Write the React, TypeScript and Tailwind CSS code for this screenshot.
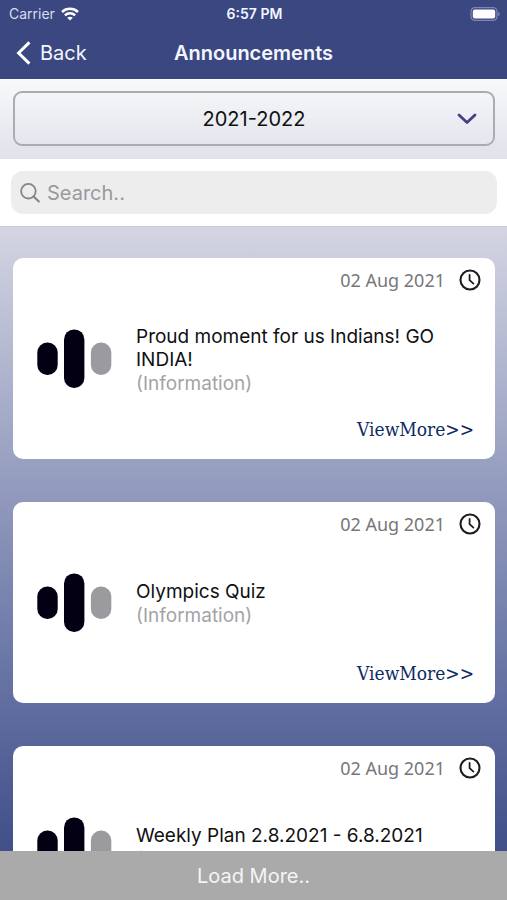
import { useState } from "react";

type Announcement = { id: number; date: string; title: string; kind: string };

const announcements: Announcement[] = [
  { id: 1, date: "02 Aug 2021", title: "Proud moment for us Indians! GO INDIA!", kind: "(Information)" },
  { id: 2, date: "02 Aug 2021", title: "Olympics Quiz", kind: "(Information)" },
  { id: 3, date: "02 Aug 2021", title: "Weekly Plan 2.8.2021 - 6.8.2021", kind: "(Information)" },
];

function WifiIcon() {
  return (
    <svg className="h-[14px] w-[18px]" viewBox="0 0 18 14" fill="none" stroke="currentColor" strokeWidth="2.5" aria-hidden="true">
      <path d="M1 5C5.4.8 12.6.8 17 5" />
      <path d="M3.9 8.3c2.8-2.8 7.4-2.8 10.2 0" />
      <path d="M9 13.6 6.2 10.8c1.6-1.4 4-1.4 5.6 0Z" fill="currentColor" stroke="none" />
    </svg>
  );
}

function BatteryIcon() {
  return (
    <svg className="h-[14px] w-[30px]" viewBox="0 0 30 14" aria-hidden="true">
      <rect x="1" y="0.6" width="26" height="12.8" rx="4" fill="none" stroke="#8088b0" strokeWidth="1.2" />
      <rect x="2.8" y="2.4" width="22.4" height="9.2" rx="2" fill="#fff" />
      <path d="M28.2 4.8c2 .8 2 3.6 0 4.4Z" fill="#8088b0" />
    </svg>
  );
}

function ClockIcon() {
  return (
    <svg className="size-[22px]" viewBox="0 0 22 22" fill="none" stroke="#1c1c1e" strokeLinecap="round" strokeLinejoin="round" aria-hidden="true">
      <circle cx="11" cy="11" r="9.5" strokeWidth="2.1" />
      <path d="M10.6 6v5.2l3.8 3.4" strokeWidth="1.8" />
    </svg>
  );
}

function BarsLogo() {
  return (
    <svg className="h-[60px] w-[76px] shrink-0" viewBox="0 0 76 60" aria-hidden="true">
      <rect x="0.3" y="13.5" width="20.4" height="32.5" rx="10" fill="#030014" />
      <rect x="27" y="0.4" width="20.4" height="58.6" rx="10" fill="#030014" />
      <rect x="53.9" y="13.5" width="20.4" height="32.5" rx="10" fill="#9b9a9e" />
    </svg>
  );
}

function AnnouncementCard({ item }: { item: Announcement }) {
  return (
    <article className="flex h-[201px] shrink-0 flex-col rounded-[10px] bg-white pl-6 pr-[14px]">
      <div className="flex h-11 items-center justify-end gap-[14px]">
        <time className="font-['Noto_Sans',sans-serif] text-[18px] leading-6 text-[#77777a]">{item.date}</time>
        <ClockIcon />
      </div>
      <div className="flex flex-1 items-center gap-[23px]">
        <BarsLogo />
        <div className="flex-1 pr-10 pt-0.5 text-[19px] leading-[23px]">
          <h2 className="text-[#101012]">{item.title}</h2>
          <p className="mt-px text-[#a3a3a6]">{item.kind}</p>
        </div>
      </div>
      <div className="flex h-[44px] items-start justify-end pr-[7px]">
        <a href="#more" className="font-['DejaVu_Serif_Condensed','DejaVu_Serif',serif] text-[19px] leading-7 text-[#0f2c62]">
          ViewMore&gt;&gt;
        </a>
      </div>
    </article>
  );
}

export default function App() {
  const [year, setYear] = useState("2021-2022");
  const [query, setQuery] = useState("");

  return (
    <div className="flex h-screen flex-col overflow-hidden bg-white font-[Inter,sans-serif]">
      <header className="shrink-0 bg-[#3a4780] text-[#f4f6ff]">
        <div className="grid h-[27px] grid-cols-3 items-center pl-[9px] pr-[7px]">
          <span className="flex items-center gap-[6px] text-[14px] leading-4 text-[#d9dded]">
            Carrier
            <span className="text-white"><WifiIcon /></span>
          </span>
          <span className="text-center text-[14px] font-semibold leading-4">6:57 PM</span>
          <span className="flex justify-end"><BatteryIcon /></span>
        </div>
        <div className="grid h-[52px] grid-cols-[1fr_auto_1fr] items-center px-4">
          <button type="button" className="flex items-center gap-[9px] text-[20px] leading-6">
            <svg className="h-6 w-[15px]" viewBox="0 0 15 24" fill="none" stroke="#fff" strokeWidth="3" aria-hidden="true">
              <path d="M13.4 1.4 2.6 12l10.8 10.6" />
            </svg>
            Back
          </button>
          <h1 className="text-[20px] font-semibold leading-6">Announcements</h1>
        </div>
      </header>

      <div className="shrink-0 bg-linear-to-b from-[#f8f9fb] to-[#e1e2ea] pb-[13px] pl-[13px] pr-3 pt-3">
        <div className="grid items-center">
          <select
            aria-label="Academic year"
            value={year}
            onChange={(e) => setYear(e.target.value)}
            className="col-start-1 row-start-1 h-[55px] w-full appearance-none rounded-[9px] border-2 border-[#acacb0] bg-transparent px-10 text-[20px] text-[#101012] [text-align-last:center]"
          >
            <option>2021-2022</option>
            <option>2020-2021</option>
          </select>
          <svg className="pointer-events-none col-start-1 row-start-1 mr-[18px] h-3 w-5 justify-self-end" viewBox="0 0 20 12" fill="none" stroke="#443f87" strokeWidth="2.8" strokeLinecap="round" strokeLinejoin="round" aria-hidden="true">
            <path d="m2 2 8 7.6L18 2" />
          </svg>
        </div>
      </div>

      <div className="shrink-0 border-b border-[#c9cbd8] py-3 pl-[11px] pr-[10px]">
        <label className="flex h-[43px] items-center gap-[7px] rounded-xl bg-[#ededed] pl-[9px] pr-3">
          <svg className="size-5 shrink-0" viewBox="0 0 20 20" fill="none" stroke="#858588" strokeWidth="1.8" strokeLinecap="round" aria-hidden="true">
            <circle cx="8.4" cy="8.2" r="7.3" />
            <path d="m13.6 13.4 5.2 5" strokeWidth="2.1" />
          </svg>
          <input
            type="text"
            aria-label="Search announcements"
            placeholder="Search.."
            value={query}
            onChange={(e) => setQuery(e.target.value)}
            className="min-w-0 flex-1 bg-transparent text-[20px] leading-6 outline-none placeholder:text-[#99999c]"
          />
        </label>
      </div>

      <main className="flex min-h-0 flex-1 flex-col gap-[43px] overflow-y-auto bg-linear-to-b from-[#d4d5e2] to-[#414f8a] pl-[13px] pr-3 pt-[31px] [scrollbar-width:none]">
        {announcements.map((item) => (
          <AnnouncementCard key={item.id} item={item} />
        ))}
      </main>

      <button type="button" className="h-[49px] shrink-0 bg-[#aaaaaa] text-[20px] leading-6 text-[#f5f5f5]">
        Load More..
      </button>
    </div>
  );
}
